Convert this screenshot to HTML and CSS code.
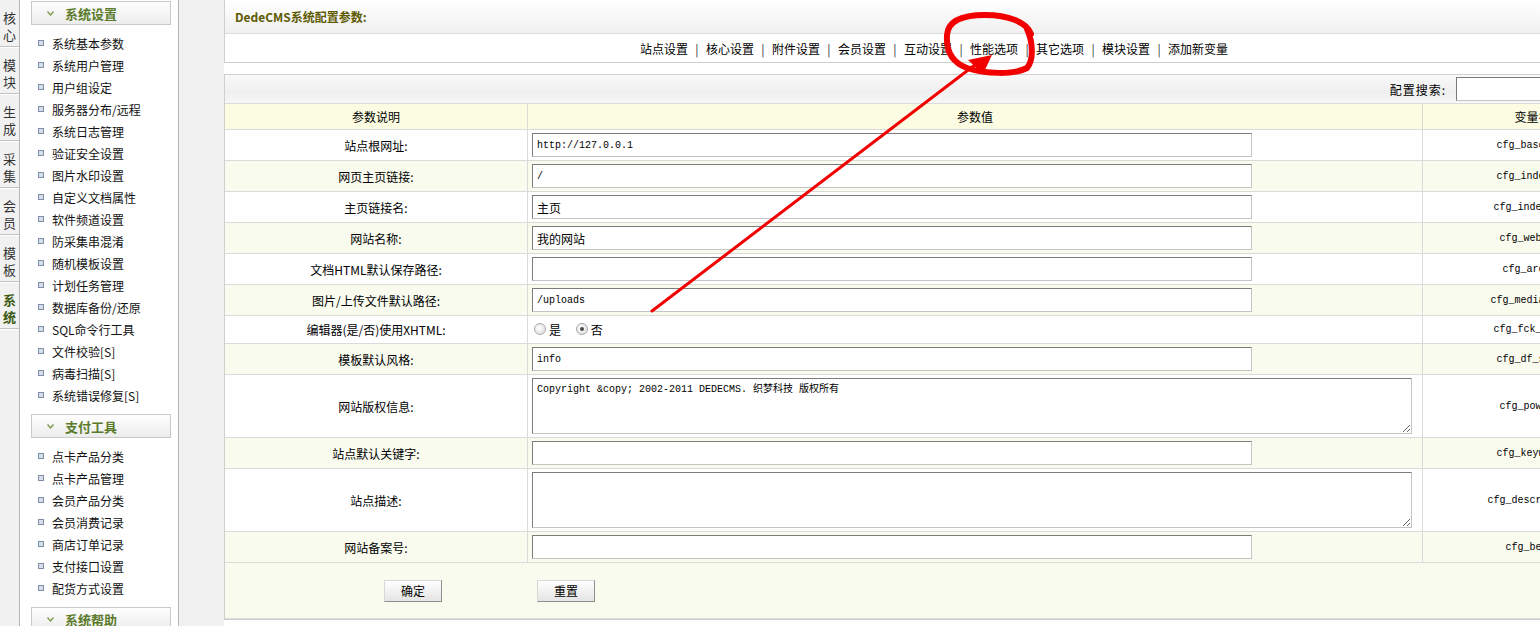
FILE: index.html
```html
<!DOCTYPE html>
<html lang="zh-CN">
<head>
<meta charset="utf-8">
<title>DedeCMS系统配置参数</title>
<link rel="stylesheet" href="styles.css">
</head>
<body>
<div class="app">
  <nav class="tabs">
    <div class="tab">核<br>心</div>
    <div class="tab">模<br>块</div>
    <div class="tab">生<br>成</div>
    <div class="tab">采<br>集</div>
    <div class="tab">会<br>员</div>
    <div class="tab">模<br>板</div>
    <div class="tab active">系<br>统</div>
  </nav>

  <aside class="menu">
    <div class="group">
      <div class="ghead"><svg class="chev" width="7" height="5" viewBox="0 0 7 5"><path d="M0.5 0.5 L3.5 4 L6.5 0.5" fill="none" stroke="#7d9a4a" stroke-width="1.4"/></svg>系统设置</div>
      <ul class="items">
        <li><i></i>系统基本参数</li>
        <li><i></i>系统用户管理</li>
        <li><i></i>用户组设定</li>
        <li><i></i>服务器分布/远程</li>
        <li><i></i>系统日志管理</li>
        <li><i></i>验证安全设置</li>
        <li><i></i>图片水印设置</li>
        <li><i></i>自定义文档属性</li>
        <li><i></i>软件频道设置</li>
        <li><i></i>防采集串混淆</li>
        <li><i></i>随机模板设置</li>
        <li><i></i>计划任务管理</li>
        <li><i></i>数据库备份/还原</li>
        <li><i></i>SQL命令行工具</li>
        <li><i></i>文件校验[S]</li>
        <li><i></i>病毒扫描[S]</li>
        <li><i></i>系统错误修复[S]</li>
      </ul>
    </div>
    <div class="group">
      <div class="ghead"><svg class="chev" width="7" height="5" viewBox="0 0 7 5"><path d="M0.5 0.5 L3.5 4 L6.5 0.5" fill="none" stroke="#7d9a4a" stroke-width="1.4"/></svg>支付工具</div>
      <ul class="items">
        <li><i></i>点卡产品分类</li>
        <li><i></i>点卡产品管理</li>
        <li><i></i>会员产品分类</li>
        <li><i></i>会员消费记录</li>
        <li><i></i>商店订单记录</li>
        <li><i></i>支付接口设置</li>
        <li><i></i>配货方式设置</li>
      </ul>
    </div>
    <div class="group">
      <div class="ghead"><svg class="chev" width="7" height="5" viewBox="0 0 7 5"><path d="M0.5 0.5 L3.5 4 L6.5 0.5" fill="none" stroke="#7d9a4a" stroke-width="1.4"/></svg>系统帮助</div>
    </div>
  </aside>

  <div class="gutter"></div>

  <main class="main">
    <section class="box headbox">
      <div class="boxhead">DedeCMS系统配置参数:</div>
      <div class="navrow">
        <a>站点设置</a><span class="sep">|</span>
        <a>核心设置</a><span class="sep">|</span>
        <a>附件设置</a><span class="sep">|</span>
        <a>会员设置</a><span class="sep">|</span>
        <a>互动设置</a><span class="sep">|</span>
        <a>性能选项</a><span class="sep">|</span>
        <a>其它选项</a><span class="sep">|</span>
        <a>模块设置</a><span class="sep">|</span>
        <a>添加新变量</a>
      </div>
    </section>

    <section class="box confbox">
      <div class="searchbar">
        <span class="slabel">配置搜索:</span>
        <input class="sinput" type="text">
      </div>
      <table class="conf">
        <tr class="thead">
          <td class="c1">参数说明</td>
          <td class="c2 center">参数值</td>
          <td class="c3">变量名</td>
        </tr>
        <tr class="r">
          <td class="c1">站点根网址:</td>
          <td class="c2"><input class="txt" type="text" value="http://127.0.0.1"></td>
          <td class="c3 var">cfg_basehost</td>
        </tr>
        <tr class="r alt">
          <td class="c1">网页主页链接:</td>
          <td class="c2"><input class="txt" type="text" value="/"></td>
          <td class="c3 var">cfg_indexurl</td>
        </tr>
        <tr class="r">
          <td class="c1">主页链接名:</td>
          <td class="c2"><input class="txt cjk" type="text" value="主页"></td>
          <td class="c3 var">cfg_indexname</td>
        </tr>
        <tr class="r alt">
          <td class="c1">网站名称:</td>
          <td class="c2"><input class="txt cjk" type="text" value="我的网站"></td>
          <td class="c3 var">cfg_webname</td>
        </tr>
        <tr class="r">
          <td class="c1">文档HTML默认保存路径:</td>
          <td class="c2"><input class="txt" type="text" value=""></td>
          <td class="c3 var">cfg_arcdir</td>
        </tr>
        <tr class="r alt">
          <td class="c1">图片/上传文件默认路径:</td>
          <td class="c2"><input class="txt" type="text" value="/uploads"></td>
          <td class="c3 var">cfg_medias_dir</td>
        </tr>
        <tr class="r radio">
          <td class="c1">编辑器(是/否)使用XHTML:</td>
          <td class="c2">
            <label class="opt"><span class="rb"></span>是</label>
            <label class="opt"><span class="rb on"></span>否</label>
          </td>
          <td class="c3 var">cfg_fck_xhtml</td>
        </tr>
        <tr class="r alt">
          <td class="c1">模板默认风格:</td>
          <td class="c2"><input class="txt" type="text" value="info"></td>
          <td class="c3 var">cfg_df_style</td>
        </tr>
        <tr class="r big">
          <td class="c1">网站版权信息:</td>
          <td class="c2"><textarea class="area">Copyright &amp;copy; 2002-2011 DEDECMS. 织梦科技 版权所有</textarea></td>
          <td class="c3 var">cfg_powerby</td>
        </tr>
        <tr class="r alt">
          <td class="c1">站点默认关键字:</td>
          <td class="c2"><input class="txt" type="text" value=""></td>
          <td class="c3 var">cfg_keywords</td>
        </tr>
        <tr class="r big">
          <td class="c1">站点描述:</td>
          <td class="c2"><textarea class="area"></textarea></td>
          <td class="c3 var">cfg_description</td>
        </tr>
        <tr class="r alt">
          <td class="c1">网站备案号:</td>
          <td class="c2"><input class="txt" type="text" value=""></td>
          <td class="c3 var">cfg_beian</td>
        </tr>
        <tr class="btnrow">
          <td colspan="3">
            <div class="btns">
              <button class="btn" type="button">确定</button>
              <button class="btn" type="button">重置</button>
            </div>
          </td>
        </tr>
      </table>
    </section>
  </main>

  <svg class="annot" width="1540" height="626" viewBox="0 0 1540 626">
    <path d="M1031 34 C1027 22 1008 15 985 15 C962 15 948 21 947 35 C946 50 951 62 967 68 C985 74 1014 75 1027 68 C1034 60 1033 42 1027 29" fill="none" stroke="#f20000" stroke-width="6" stroke-linecap="round"/>
    <path d="M652 311 L980 61" fill="none" stroke="#f20000" stroke-width="3" stroke-linecap="round"/>
    <polygon points="992,55 968,60 983,74" fill="#f20000"/>
  </svg>
</div>
</body>
</html>
```

FILE: styles.css
```css
html, body {
  margin: 0;
  padding: 0;
  width: 1540px;
  height: 626px;
  overflow: hidden;
  background: #ffffff;
  font-family: "Noto Sans CJK SC", "Liberation Sans", sans-serif;
  font-size: 12px;
  color: #000;
}

.app {
  position: relative;
  display: flex;
  width: 1644px;
  height: 626px;
}

/* left vertical tabs */
.tabs {
  flex: none;
  width: 19px;
  background: #f1f1f1;
  border-right: 1px solid #b7b7b7;
}
.tab {
  box-sizing: border-box;
  height: 47px;
  padding-top: 9px;
  line-height: 17px;
  text-align: center;
  color: #333;
  font-size: 13px;
  border-bottom: 1px solid #c2c2c2;
  box-shadow: 0 1px 0 #ffffff;
}
.tab.active {
  color: #3c5a12;
  font-weight: bold;
}

/* sidebar menu */
.menu {
  flex: none;
  box-sizing: border-box;
  width: 159px;
  padding: 1px 0 0 11px;
  background: #ffffff;
  border-right: 1px solid #b5b5b5;
}
.group + .group {
  margin-top: 8px;
}
.ghead {
  box-sizing: border-box;
  width: 140px;
  height: 24px;
  display: flex;
  align-items: center;
  padding-left: 15px;
  border: 1px solid #c9c9c9;
  background: linear-gradient(#fefefe, #ececec);
  color: #5b7b2b;
  font-weight: bold;
  font-size: 13px;
}
.chev {
  margin-right: 11px;
}
.items {
  list-style: none;
  margin: 0;
  padding: 7px 0 0 0;
}
.items li {
  display: flex;
  align-items: center;
  height: 22px;
  padding-left: 7px;
  color: #111;
}
.items li i {
  box-sizing: border-box;
  width: 6px;
  height: 6px;
  margin-right: 8px;
  border: 1px solid #7e8ea6;
  background: #d9dfea;
}

/* gutter */
.gutter {
  flex: none;
  width: 45px;
  background: #f1f1f1;
}

/* main */
.main {
  flex: none;
  width: 1420px;
  background: #ffffff;
}
.box {
  border: 1px solid #cfcfcf;
  box-sizing: border-box;
}
.headbox {
  border-top: none;
}
.boxhead {
  height: 33px;
  display: flex;
  align-items: center;
  padding-left: 10px;
  border-bottom: 1px solid #dcdcdc;
  background: linear-gradient(#ffffff, #f0f0f0);
  color: #5e5a00;
  font-weight: bold;
  font-size: 12px;
}
.navrow {
  height: 28px;
  display: flex;
  align-items: center;
  justify-content: center;
}
.navrow a {
  color: #000;
  white-space: nowrap;
}
.sep {
  width: 18px;
  text-align: center;
  color: #333;
}

.confbox {
  margin-top: 11px;
}
.searchbar {
  height: 28px;
  display: flex;
  align-items: center;
  justify-content: flex-end;
  padding-right: 37px;
  border-bottom: 1px solid #dcdcdc;
  background: linear-gradient(#f9f9f9, #efefef 60%, #f7f7f7);
}
.slabel {
  margin-right: 10px;
  letter-spacing: 1px;
}
.sinput {
  box-sizing: border-box;
  width: 150px;
  height: 24px;
  border: 1px solid;
  border-color: #7b7b7b #c6c6c6 #c6c6c6 #7b7b7b;
  background: #fff;
}

.conf {
  width: 100%;
  border-collapse: collapse;
  table-layout: fixed;
}
.conf td {
  border: 1px solid #dadada;
  padding: 0 4px;
  vertical-align: middle;
}
.conf tr:first-child td {
  border-top: none;
}
.conf td:first-child {
  border-left: none;
}
.conf .c1 {
  width: 294px;
  text-align: center;
}
.conf .c2 {
  width: 886px;
}
.conf .c3 {
  text-align: center;
}
.conf .center {
  text-align: center;
}
.thead td {
  height: 25px;
  background: #fbfce2;
}
.r td {
  height: 30px;
  background: #ffffff;
}
.r.alt td {
  background: #f9fbef;
}
.r.radio td {
  height: 27px;
}
.r.big td {
  height: 62px;
}
.var {
  font-family: "Liberation Mono", monospace;
  font-size: 10px;
}
.txt {
  display: block;
  box-sizing: border-box;
  width: 720px;
  height: 24px;
  margin: 0;
  padding: 0 4px;
  border: 1px solid;
  border-color: #7c7c7c #c4c4c4 #c4c4c4 #7c7c7c;
  background: #fff;
  font-family: "Liberation Mono", monospace;
  font-size: 10px;
  color: #000;
}
.txt.cjk {
  font-family: "Noto Sans CJK SC", sans-serif;
  font-size: 12px;
}
.area {
  display: block;
  box-sizing: border-box;
  width: 880px;
  height: 56px;
  margin: 0;
  padding: 3px 4px;
  border: 1px solid;
  border-color: #7c7c7c #c4c4c4 #c4c4c4 #7c7c7c;
  background: #fff;
  font-family: "Liberation Mono", "Noto Sans CJK SC", monospace;
  font-size: 10px;
  line-height: 15px;
  color: #000;
}
.opt {
  display: inline-flex;
  align-items: center;
  margin-left: 2px;
  margin-right: 10px;
}
.rb {
  box-sizing: border-box;
  width: 12px;
  height: 12px;
  margin-right: 3px;
  border-radius: 50%;
  border: 1px solid #a9a9a9;
  background: radial-gradient(circle at 40% 40%, #ffffff, #d8d8d8);
  position: relative;
}
.rb.on::after {
  content: "";
  position: absolute;
  left: 3px;
  top: 3px;
  width: 4px;
  height: 4px;
  border-radius: 50%;
  background: #4a4a4a;
}

.btnrow td {
  height: 55px;
  background: #f9fbef;
  padding: 0;
}
.btns {
  display: flex;
  align-items: center;
  gap: 95px;
  padding-left: 159px;
}
.btn {
  box-sizing: border-box;
  width: 58px;
  height: 22px;
  padding: 0;
  border: 1px solid;
  border-color: #d8d8d8 #8e8e8e #8e8e8e #d8d8d8;
  background: linear-gradient(#ffffff, #e4e4e4);
  font-family: "Noto Sans CJK SC", sans-serif;
  font-size: 12px;
  color: #000;
}

/* annotation overlay */
.annot {
  position: absolute;
  left: 0;
  top: 0;
  pointer-events: none;
}
```
